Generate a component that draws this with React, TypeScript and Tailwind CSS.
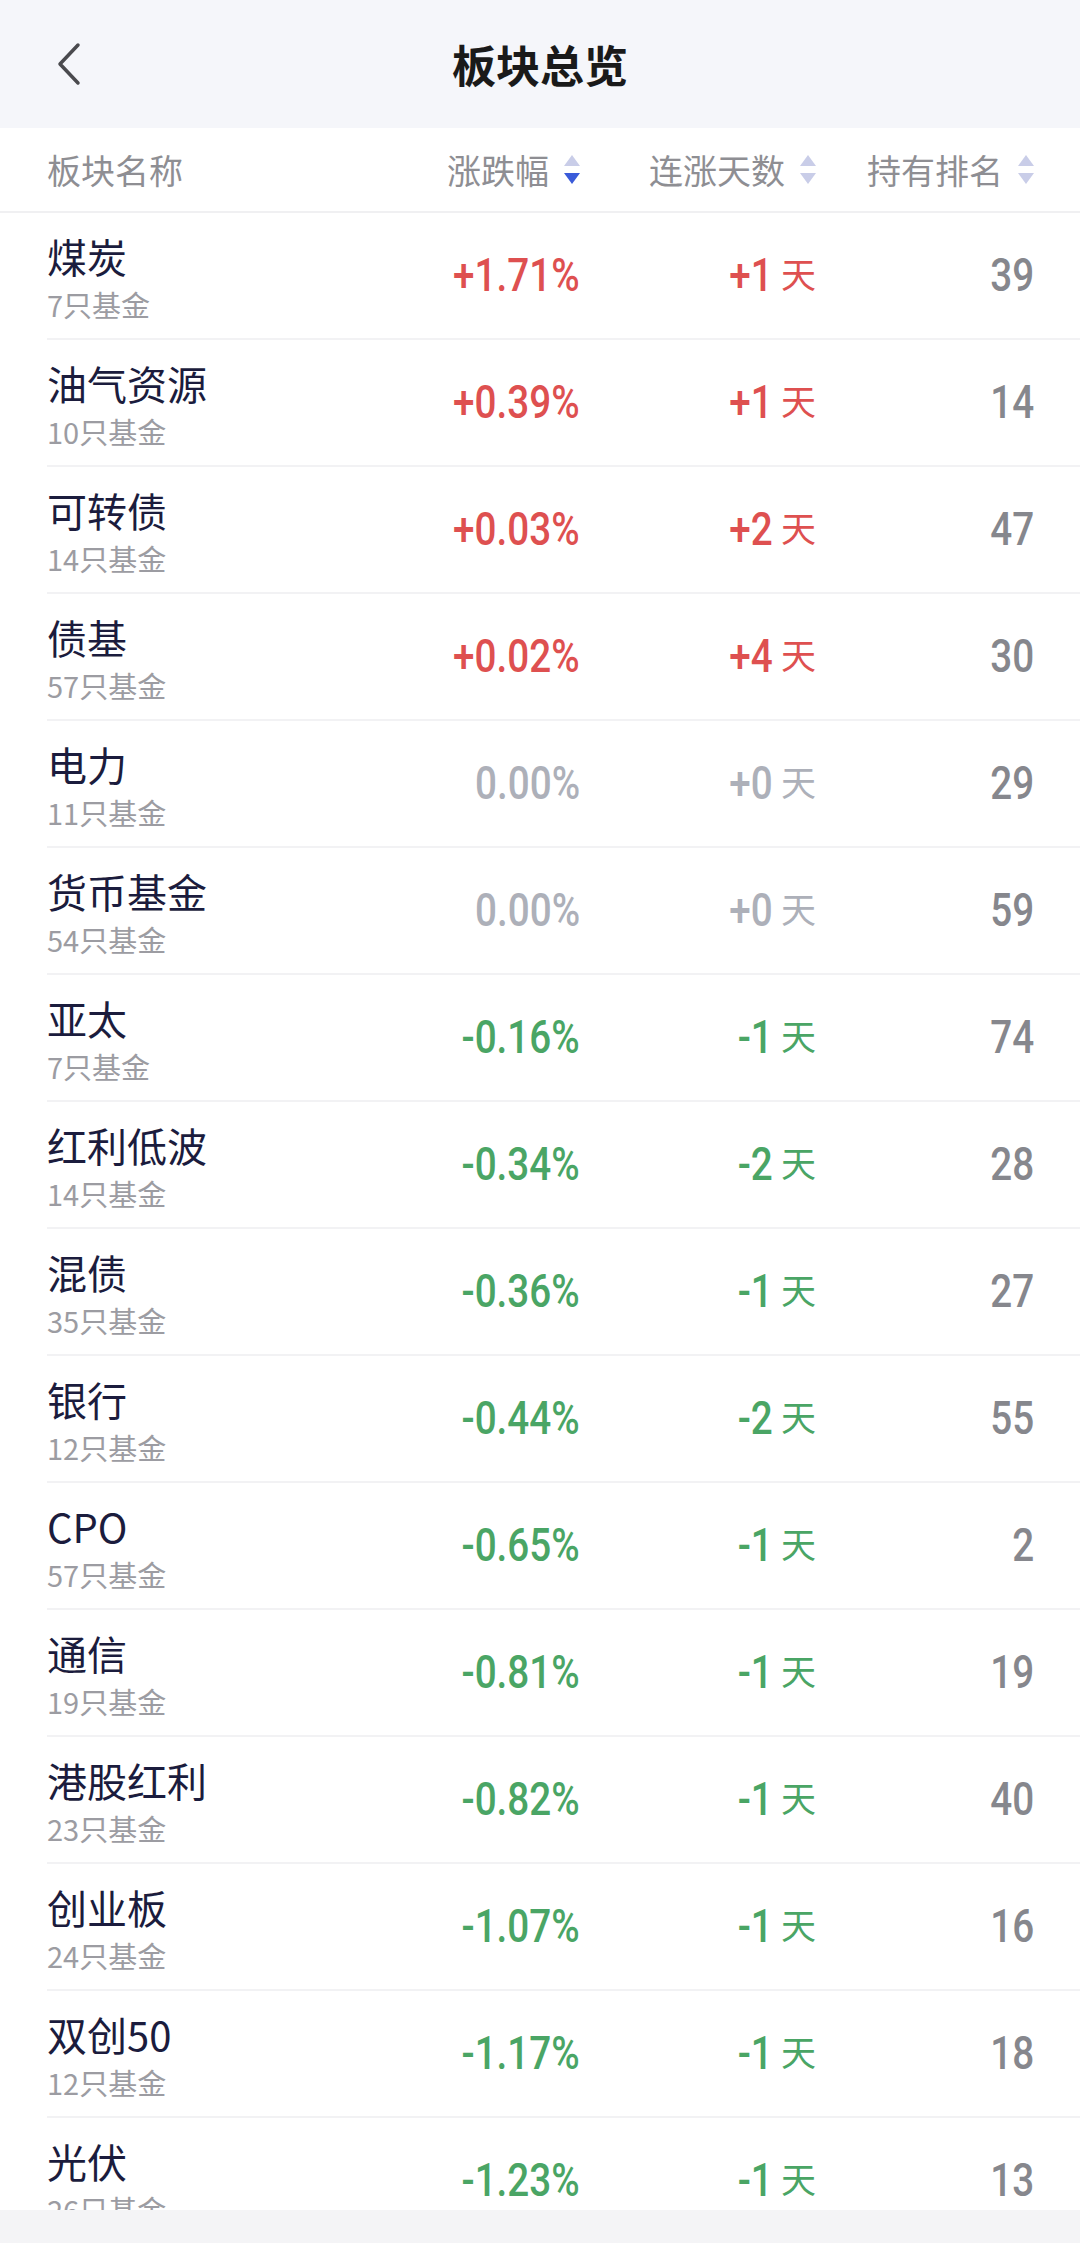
import React from 'react';

type Trend = 'up' | 'down' | 'flat';

interface Sector {
  name: string;
  funds: number;
  change: string;
  streak: string;
  rank: number;
  trend: Trend;
}

const sectors: Sector[] = [
  { name: '煤炭', funds: 7, change: '+1.71%', streak: '+1', rank: 39, trend: 'up' },
  { name: '油气资源', funds: 10, change: '+0.39%', streak: '+1', rank: 14, trend: 'up' },
  { name: '可转债', funds: 14, change: '+0.03%', streak: '+2', rank: 47, trend: 'up' },
  { name: '债基', funds: 57, change: '+0.02%', streak: '+4', rank: 30, trend: 'up' },
  { name: '电力', funds: 11, change: '0.00%', streak: '+0', rank: 29, trend: 'flat' },
  { name: '货币基金', funds: 54, change: '0.00%', streak: '+0', rank: 59, trend: 'flat' },
  { name: '亚太', funds: 7, change: '-0.16%', streak: '-1', rank: 74, trend: 'down' },
  { name: '红利低波', funds: 14, change: '-0.34%', streak: '-2', rank: 28, trend: 'down' },
  { name: '混债', funds: 35, change: '-0.36%', streak: '-1', rank: 27, trend: 'down' },
  { name: '银行', funds: 12, change: '-0.44%', streak: '-2', rank: 55, trend: 'down' },
  { name: 'CPO', funds: 57, change: '-0.65%', streak: '-1', rank: 2, trend: 'down' },
  { name: '通信', funds: 19, change: '-0.81%', streak: '-1', rank: 19, trend: 'down' },
  { name: '港股红利', funds: 23, change: '-0.82%', streak: '-1', rank: 40, trend: 'down' },
  { name: '创业板', funds: 24, change: '-1.07%', streak: '-1', rank: 16, trend: 'down' },
  { name: '双创50', funds: 12, change: '-1.17%', streak: '-1', rank: 18, trend: 'down' },
  { name: '光伏', funds: 26, change: '-1.23%', streak: '-1', rank: 13, trend: 'down' },
];

const trendColor: Record<Trend, string> = {
  up: 'text-[#de5050]',
  down: 'text-[#4aa565]',
  flat: 'text-[#adb0b9]',
};

const cjk = "font-['Noto_Sans_CJK_SC',sans-serif]";
// condensed look for figures: Roboto squeezed horizontally
const num = "inline-block origin-right scale-x-[0.84] font-['Roboto',sans-serif] font-medium text-[46px]";

const SortIcon: React.FC<{ active?: boolean }> = ({ active }) => (
  <svg width="16" height="30" viewBox="0 0 16 30" className="shrink-0">
    <polygon points="8,0 16,11 0,11" fill="#c9cde8" />
    <polygon points="0,18 16,18 8,29" fill={active ? '#3a5bd9' : '#c9cde8'} />
  </svg>
);

const HeaderCell: React.FC<{ label: string; width: string; active?: boolean }> = ({
  label,
  width,
  active,
}) => (
  <div className={`${width} flex items-center justify-end gap-[15px]`}>
    <span>{label}</span>
    <SortIcon active={active} />
  </div>
);

const SectorRow: React.FC<{ sector: Sector }> = ({ sector }) => {
  const color = trendColor[sector.trend];
  return (
    <div className="ml-[47px] pr-[46px] h-[127px] shrink-0 flex items-center border-b-2 border-[#f2f2f4]">
      <div className="flex-1 flex flex-col">
        <span className="text-[40px] leading-[52px] text-[#1b1c3d]">{sector.name}</span>
        <span className="mt-[4px] text-[29px] leading-[36px] text-[#9c9ca2]">{sector.funds}只基金</span>
      </div>
      <div className={`w-[250px] flex justify-end ${color}`}>
        <span className={num}>{sector.change}</span>
      </div>
      <div className={`w-[236px] flex justify-end items-baseline ${color}`}>
        <span className={num}>{sector.streak}</span>
        <span className="ml-[8px] text-[35px] -translate-y-[3px]">天</span>
      </div>
      <div className="w-[218px] flex justify-end text-[#86878d]">
        <span className={num}>{sector.rank}</span>
      </div>
    </div>
  );
};

export default function App() {
  return (
    <div className={`w-[1080px] h-[2243px] flex flex-col bg-white overflow-hidden ${cjk}`}>
      {/* Nav bar */}
      <header className="h-[128px] shrink-0 bg-[#f5f6fa] grid grid-cols-[1fr_auto_1fr] items-center">
        <div className="pl-[56px] flex items-center">
          <svg width="26" height="44" viewBox="0 0 26 44" fill="none">
            <polyline
              points="22,3 4,22 22,41"
              stroke="#4a4a4e"
              strokeWidth="3.5"
              strokeLinecap="round"
              strokeLinejoin="round"
            />
          </svg>
        </div>
        <h1 className="text-[44px] font-semibold text-[#1a1a1a] leading-none">板块总览</h1>
        <div />
      </header>

      {/* Column headers */}
      <div className="h-[85px] shrink-0 flex items-center pl-[47px] pr-[46px] border-b-2 border-[#f0f0f2] text-[34px] text-[#8e8e93]">
        <div className="flex-1">板块名称</div>
        <HeaderCell label="涨跌幅" width="w-[250px]" active />
        <HeaderCell label="连涨天数" width="w-[236px]" />
        <HeaderCell label="持有排名" width="w-[218px]" />
      </div>

      <div className="flex-1 flex flex-col overflow-hidden">
        {sectors.map((s) => (
          <SectorRow key={s.name} sector={s} />
        ))}
      </div>

      <div className="h-[33px] shrink-0 bg-[#f4f4f6]" />
    </div>
  );
}
